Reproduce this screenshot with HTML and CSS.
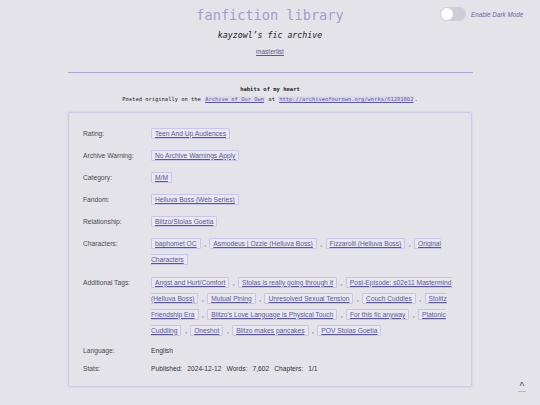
FILE: index.html
```html
<!DOCTYPE html>
<html lang="en">
<head>
<meta charset="utf-8">
<title>fanfiction library</title>
<link rel="stylesheet" href="styles.css">
</head>
<body>
<div class="toggle">
  <span class="switch"><span class="knob"></span></span>
  <span class="toggle-label">Enable Dark Mode</span>
</div>
<header class="site-header">
  <h1 class="site-title">fanfiction library</h1>
  <p class="site-sub">kayzowl’s fic archive</p>
  <nav class="site-nav"><a href="#">masterlist</a></nav>
</header>
<hr class="rule">
<main class="work">
  <h2 class="work-title">habits of my heart</h2>
  <p class="work-source">Posted originally on the <a href="#">Archive of Our Own</a> at <a href="#">http://archiveofourown.org/works/61281802</a>.</p>
  <dl class="meta">
    <div class="row"><dt>Rating:</dt><dd><a class="tag" href="#">Teen And Up Audiences</a></dd></div>
    <div class="row"><dt>Archive Warning:</dt><dd><a class="tag" href="#">No Archive Warnings Apply</a></dd></div>
    <div class="row"><dt>Category:</dt><dd><a class="tag" href="#">M/M</a></dd></div>
    <div class="row"><dt>Fandom:</dt><dd><a class="tag" href="#">Helluva Boss (Web Series)</a></dd></div>
    <div class="row"><dt>Relationship:</dt><dd><a class="tag" href="#">Blitzo/Stolas Goetia</a></dd></div>
    <div class="row"><dt>Characters:</dt><dd><a class="tag" href="#">baphomet OC</a><span class="sep">,</span> <a class="tag" href="#">Asmodeus | Ozzie (Helluva Boss)</a><span class="sep">,</span> <a class="tag" href="#">Fizzarolli (Helluva Boss)</a><span class="sep">,</span> <a class="tag" href="#">Original Characters</a></dd></div>
    <div class="row"><dt>Additional Tags:</dt><dd><a class="tag" href="#">Angst and Hurt/Comfort</a><span class="sep">,</span> <a class="tag" href="#">Stolas is really going through it</a><span class="sep">,</span> <a class="tag" href="#">Post-Episode: s02e11 Mastermind (Helluva Boss)</a><span class="sep">,</span> <a class="tag" href="#">Mutual Pining</a><span class="sep">,</span> <a class="tag" href="#">Unresolved Sexual Tension</a><span class="sep">,</span> <a class="tag" href="#">Couch Cuddles</a><span class="sep">,</span> <a class="tag" href="#">Stolitz Friendship Era</a><span class="sep">,</span> <a class="tag" href="#">Blitzo's Love Language is Physical Touch</a><span class="sep">,</span> <a class="tag" href="#">For this fic anyway</a><span class="sep">,</span> <a class="tag" href="#">Platonic Cuddling</a><span class="sep">,</span> <a class="tag" href="#">Oneshot</a><span class="sep">,</span> <a class="tag" href="#">Blitzo makes pancakes</a><span class="sep">,</span> <a class="tag" href="#">POV Stolas Goetia</a></dd></div>
    <div class="row plain"><dt>Language:</dt><dd>English</dd></div>
    <div class="row plain"><dt>Stats:</dt><dd><span class="stat">Published:</span><span class="stat">2024-12-12</span><span class="stat">Words:</span><span class="stat">7,602</span><span class="stat">Chapters:</span><span class="stat">1/1</span></dd></div>
  </dl>
</main>
<a class="to-top" href="#"><span class="caret">^</span><span class="bar"></span></a>
</body>
</html>
```
FILE: styles.css
```css
html, body {
  margin: 0;
  padding: 0;
  background: #e4e3ea;
}
body {
  font-family: "Liberation Sans", Arial, sans-serif;
  color: #333;
  min-height: 405px;
}
.toggle {
  position: absolute;
  top: 7px;
  left: 440px;
  display: flex;
  align-items: center;
  gap: 5px;
}
.switch {
  display: block;
  width: 26px;
  height: 14px;
  border-radius: 7px;
  background: #cfced6;
  position: relative;
}
.knob {
  position: absolute;
  top: 1px;
  left: 1px;
  width: 12px;
  height: 12px;
  border-radius: 50%;
  background: #fff;
}
.toggle-label {
  font-style: italic;
  font-size: 6.3px;
  color: #6b679c;
}
.site-header {
  text-align: center;
  padding-top: 7px;
}
.site-title {
  margin: 0;
  font-family: "DejaVu Sans Mono", monospace;
  font-weight: normal;
  font-size: 13.6px;
  line-height: 16px;
  color: #a09dcb;
}
.site-sub {
  margin: 6.5px 0 0;
  font-family: "DejaVu Sans Mono", monospace;
  font-style: italic;
  font-size: 8.25px;
  line-height: 10px;
  color: #222;
}
.site-nav {
  margin-top: 8.5px;
  line-height: 8px;
  font-size: 6.5px;
}
.site-nav a {
  color: #5b5890;
}
.rule {
  width: 405px;
  margin: 15.5px auto 0;
  border: 0;
  border-top: 1px solid #aaa7d0;
  height: 0;
}
.work {
  width: 404px;
  margin: 0 auto;
}
.work-title {
  margin: 13.5px 0 0;
  text-align: center;
  font-family: "DejaVu Sans Mono", monospace;
  font-weight: bold;
  font-size: 5.5px;
  line-height: 7px;
  color: #222;
}
.work-source {
  margin: 3px 0 0;
  text-align: center;
  font-family: "DejaVu Sans Mono", monospace;
  font-size: 5.45px;
  line-height: 7px;
  color: #222;
}
.work-source a {
  color: #5b58a0;
  background: #dcdaea;
  padding: 0 1px;
}
.meta {
  margin: 8.5px 0 0;
  border: 1px solid #cfcde6;
  border-radius: 2px;
  box-shadow: 0 0 2px rgba(150, 145, 205, 0.45);
  padding: 13px 14px 11px 14px;
  display: flex;
  flex-direction: column;
  gap: 6.2px;
}
.row {
  display: grid;
  grid-template-columns: 68px 1fr;
  font-size: 6.7px;
  line-height: 16px;
}
.row.plain {
  line-height: 12px;
}
.row dt {
  color: #4a4a4a;
}
.row dd {
  margin: 0;
  color: #333;
}
.tag {
  color: #5a5696;
  background: #e9e8f1;
  border: 1px solid #c8c5e6;
  border-radius: 1px;
  padding: 1px 3px;
}
.sep {
  margin: 0 1.5px 0 3.5px;
  color: #444;
}
.stat {
  margin-right: 5px;
}
.to-top {
  position: fixed;
  right: 14px;
  bottom: 13px;
  display: flex;
  flex-direction: column;
  align-items: center;
  text-decoration: none;
  color: #6a66a0;
}
.caret {
  font-size: 9px;
  line-height: 8px;
  font-weight: bold;
}
.bar {
  display: block;
  width: 8px;
  height: 1px;
  margin-top: 2px;
  background: #b9b6d6;
}
```
